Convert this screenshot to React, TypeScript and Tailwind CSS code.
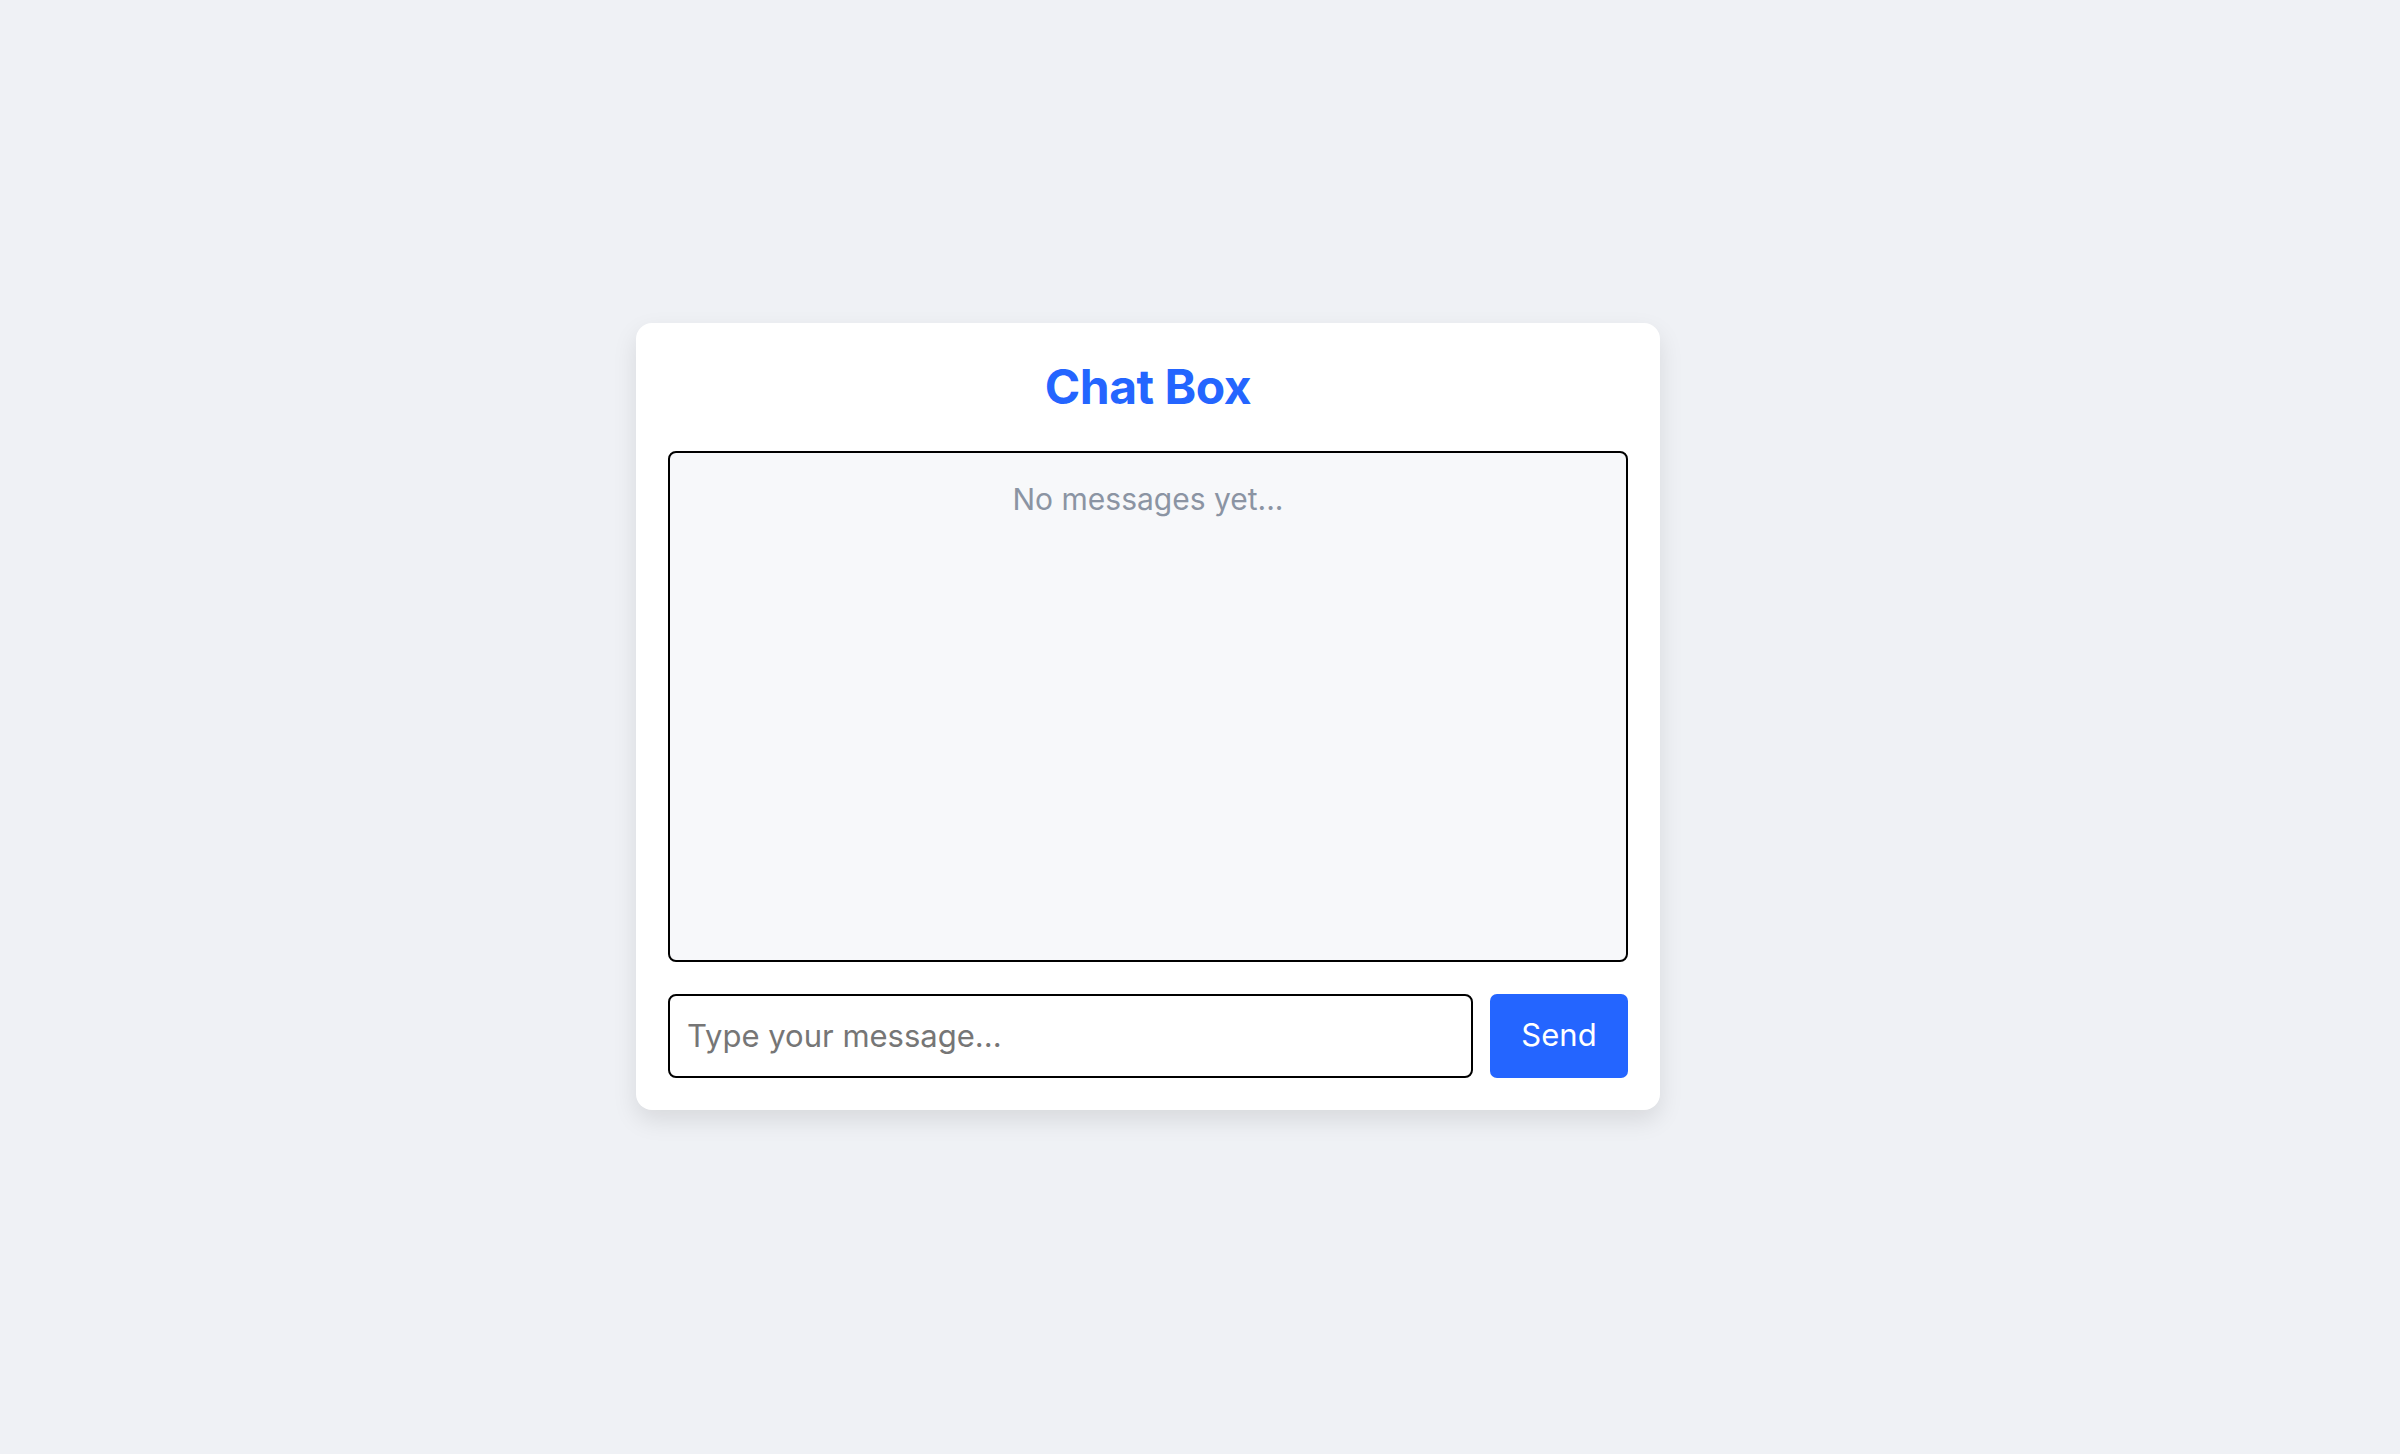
import React, { useState } from 'react';

export default function App() {
  const [messages, setMessages] = useState<string[]>([]);
  const [text, setText] = useState('');

  const handleSend = () => {
    if (!text.trim()) return;
    setMessages([...messages, text.trim()]);
    setText('');
  };

  return (
    <div
      className="min-h-screen w-full bg-[#eff1f5] flex items-center justify-center pb-[22px] pr-[104px]"
      style={{ fontFamily: 'Inter, "Noto Sans", sans-serif' }}
    >
      <div className="w-[1024px] bg-white rounded-[16px] p-[32px] shadow-[0_10px_24px_rgba(0,0,0,0.10)]">
        <h1 className="text-center text-[48px] leading-[64px] font-bold text-[#2465ff] tracking-[-0.5px] mb-[32px]">
          Chat Box
        </h1>

        <div className="h-[511px] border-2 border-black rounded-[8px] bg-[#f7f8fa] p-[24px] overflow-y-auto">
          {messages.length === 0 ? (
            <p className="text-center text-[30px] leading-[45px] text-[#8b94a3]">No messages yet...</p>
          ) : (
            messages.map((m, i) => (
              <p key={i} className="text-[30px] leading-[45px] text-gray-800">
                {m}
              </p>
            ))
          )}
        </div>

        <div className="flex gap-[17px] mt-[32px]">
          <input
            value={text}
            onChange={(e) => setText(e.target.value)}
            onKeyDown={(e) => e.key === 'Enter' && handleSend()}
            placeholder="Type your message..."
            className="flex-1 h-[84px] border-2 border-black rounded-[8px] px-[17px] text-[31px] text-gray-800 placeholder-[#767676] outline-none"
          />
          <button
            onClick={handleSend}
            className="w-[138px] h-[84px] bg-[#2465ff] rounded-[7px] text-white text-[31px]"
          >
            Send
          </button>
        </div>
      </div>
    </div>
  );
}
